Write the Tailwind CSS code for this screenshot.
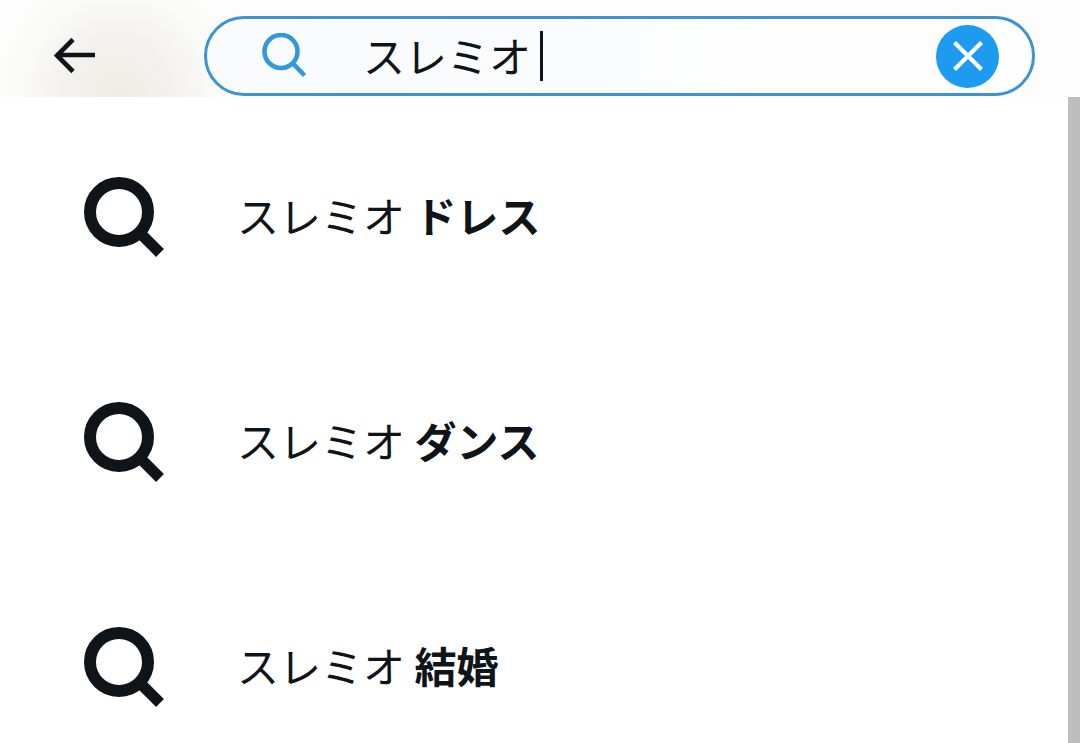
<!DOCTYPE html>
<html lang="ja">
<head>
    <meta charset="UTF-8">
    <meta name="viewport" content="width=device-width, initial-scale=1.0">
    <title>検索</title>
    <script src="https://cdn.jsdelivr.net/npm/@tailwindcss/browser@4"></script>
</head>
<body class="h-screen flex flex-col overflow-hidden bg-white text-[#0f1419] font-['Noto_Sans_CJK_JP',sans-serif]">
    <!-- Header -->
    <header class="flex items-center shrink-0 pl-[52px] pr-[45px] pt-4 pb-px bg-[#fdfdfd] bg-[radial-gradient(ellipse_130px_140px_at_118px_97px,#edece6_0%,#f3f2ee_45%,#fafaf8_75%,#fdfdfd_100%)]">
        <button type="button" aria-label="戻る" class="mr-[108px] shrink-0">
            <svg class="w-11 h-10" viewBox="0 0 44 40" fill="none" stroke="#0f1419" stroke-width="4.6">
                <path d="M43 19H5M21 3.500L5 19.500L21 35.500"/>
            </svg>
        </button>
        <form class="flex flex-1 items-center h-20 pl-[54px] pr-[33px] rounded-full border-[3px] border-[#3b94d0] bg-linear-to-r from-[#f9fafc] to-[#fefefe]" onsubmit="return false">
            <label for="search" class="mr-[56px] shrink-0" aria-label="検索">
                <svg class="w-[46px] h-[46px]" viewBox="0 0 46 46" fill="none" stroke="#3298de">
                    <circle cx="20" cy="18.500" r="16.500" stroke-width="4.600"/>
                    <path d="M32 30.500L43.500 42.500" stroke-width="4.600"/>
                </svg>
            </label>
            <input id="search" type="text" value="スレミオ" class="w-[168px] h-[60px] pb-1 text-[42px] font-normal outline-none bg-transparent">
            <span class="w-[3px] h-[50px] ml-[9px] bg-[#0f1419]"></span>
            <button type="button" aria-label="クリア" class="flex items-center justify-center ml-auto w-[63px] h-[63px] rounded-full bg-[#1d9bf0]">
                <svg class="w-8 h-8" viewBox="0 0 32 32" fill="none" stroke="#fff" stroke-width="4.2">
                    <path d="M2.500 2.500L29.500 29.500M29.500 2.500L2.500 29.500"/>
                </svg>
            </button>
        </form>
    </header>

    <!-- Suggestions -->
    <main class="flex flex-1 min-h-0">
        <ul class="flex-1 pt-[7px] text-[42px] leading-[60px] font-normal">
            <li>
                <a href="#" class="flex items-center h-[225px] pl-[84px]">
                    <svg class="w-20 h-20 mr-[73px]" viewBox="0 0 80 80" fill="none" stroke="#0f1419">
                        <circle cx="35" cy="35" r="29" stroke-width="12"/>
                        <path d="M55 55L76 76" stroke-width="11"/>
                    </svg>
                    <span class="pb-1">スレミオ <b class="font-bold">ドレス</b></span>
                </a>
            </li>
            <li>
                <a href="#" class="flex items-center h-[225px] pl-[84px]">
                    <svg class="w-20 h-20 mr-[73px]" viewBox="0 0 80 80" fill="none" stroke="#0f1419">
                        <circle cx="35" cy="35" r="29" stroke-width="12"/>
                        <path d="M55 55L76 76" stroke-width="11"/>
                    </svg>
                    <span class="pb-1">スレミオ <b class="font-bold">ダンス</b></span>
                </a>
            </li>
            <li>
                <a href="#" class="flex items-center h-[225px] pl-[84px]">
                    <svg class="w-20 h-20 mr-[73px]" viewBox="0 0 80 80" fill="none" stroke="#0f1419">
                        <circle cx="35" cy="35" r="29" stroke-width="12"/>
                        <path d="M55 55L76 76" stroke-width="11"/>
                    </svg>
                    <span class="pb-1">スレミオ <b class="font-bold">結婚</b></span>
                </a>
            </li>
        </ul>
        <!-- Scrollbar -->
        <div class="w-3 bg-[#bebebe]"></div>
    </main>
</body>
</html>
